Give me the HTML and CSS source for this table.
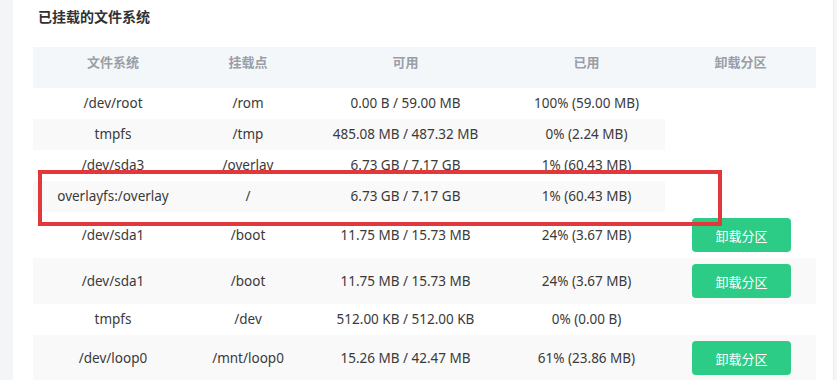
FILE: index.html
```html
<!DOCTYPE html>
<html lang="zh-CN">
<head>
<meta charset="utf-8">
<title>已挂载的文件系统</title>
<link rel="stylesheet" href="styles.css">
</head>
<body>
<div class="page">
  <div class="card">
    <h3 class="title">已挂载的文件系统</h3>
    <table class="fs-table">
      <colgroup>
        <col class="c1"><col class="c2"><col class="c3"><col class="c4"><col class="c5">
      </colgroup>
      <thead>
        <tr><th>文件系统</th><th>挂载点</th><th>可用</th><th>已用</th><th>卸载分区</th></tr>
      </thead>
      <tbody>
        <tr><td>/dev/root</td><td>/rom</td><td>0.00 B / 59.00 MB</td><td>100% (59.00 MB)</td></tr>
        <tr><td>tmpfs</td><td>/tmp</td><td>485.08 MB / 487.32 MB</td><td>0% (2.24 MB)</td></tr>
        <tr><td>/dev/sda3</td><td>/overlay</td><td>6.73 GB / 7.17 GB</td><td>1% (60.43 MB)</td></tr>
        <tr><td>overlayfs:/overlay</td><td>/</td><td>6.73 GB / 7.17 GB</td><td>1% (60.43 MB)</td></tr>
        <tr><td>/dev/sda1</td><td>/boot</td><td>11.75 MB / 15.73 MB</td><td>24% (3.67 MB)</td><td><button class="btn">卸载分区</button></td></tr>
        <tr><td>/dev/sda1</td><td>/boot</td><td>11.75 MB / 15.73 MB</td><td>24% (3.67 MB)</td><td><button class="btn">卸载分区</button></td></tr>
        <tr><td>tmpfs</td><td>/dev</td><td>512.00 KB / 512.00 KB</td><td>0% (0.00 B)</td></tr>
        <tr><td>/dev/loop0</td><td>/mnt/loop0</td><td>15.26 MB / 42.47 MB</td><td>61% (23.86 MB)</td><td><button class="btn">卸载分区</button></td></tr>
      </tbody>
    </table>
    <div class="highlight"></div>
  </div>
</div>
</body>
</html>
```

FILE: styles.css
```css
html, body {
  margin: 0;
  padding: 0;
  background: #f4f5f7;
  font-family: "Noto Sans", "Noto Sans CJK SC", sans-serif;
  overflow: hidden;
}
.page {
  display: flex;
  height: 380px;
}
.card {
  position: relative;
  margin-left: 13px;
  width: 821px;
  background: #fff;
  border-right: 1px solid #eceef1;
  padding: 0 0 0 20px;
  box-sizing: border-box;
}
.title {
  margin: 0;
  padding: 6px 0 0 5px;
  font-size: 14px;
  line-height: 20px;
  font-weight: bold;
  color: #2f3136;
  font-family: "Noto Sans CJK SC", sans-serif;
}
.fs-table {
  margin-top: 21px;
  border-collapse: collapse;
  table-layout: fixed;
  width: 783px;
}
.c1 { width: 160px; }
.c2 { width: 110px; }
.c3 { width: 205px; }
.c4 { width: 157px; }
.c5 { width: 151px; }
.fs-table th {
  background: #f4f7fa;
  color: #9a9ea6;
  font-family: "Noto Sans CJK SC", sans-serif;
  font-size: 13px;
  font-weight: bold;
  line-height: 19px;
  padding: 5px 0 17px;
  text-align: center;
}
.fs-table td {
  font-size: 13.5px;
  line-height: 19px;
  color: #3a3a3a;
  padding: 6px 0;
  text-align: center;
  white-space: nowrap;
}
.fs-table tbody tr:nth-child(even) td {
  background: #f9f9f9;
}
.btn {
  display: inline-block;
  width: 99px;
  height: 34px;
  margin-left: 2px;
  border: none;
  border-radius: 4px;
  background: #2ccb86;
  color: #fff;
  font-family: "Noto Sans CJK SC", sans-serif;
  font-size: 13px;
  padding: 0;
  vertical-align: middle;
}
.highlight {
  position: absolute;
  left: 25px;
  top: 170px;
  width: 684px;
  height: 56px;
  border: 4px solid #e2383b;
  box-sizing: border-box;
}
```
